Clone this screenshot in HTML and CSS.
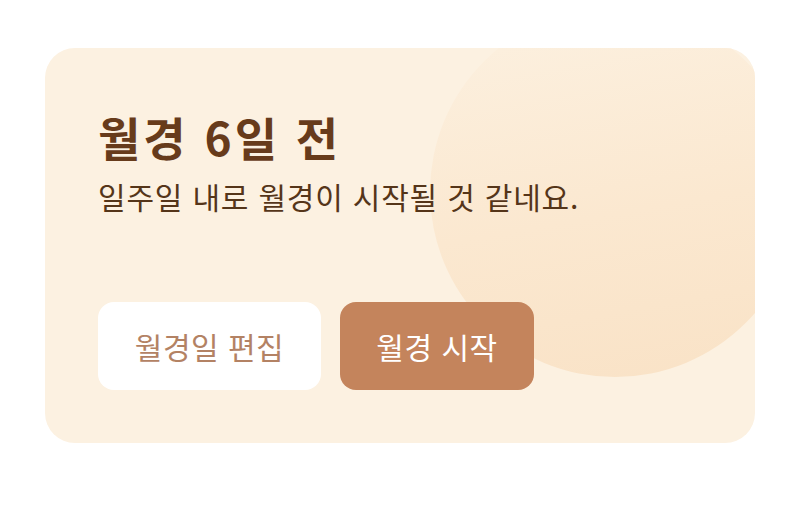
FILE: index.html
```html
<!DOCTYPE html>
<html lang="ko">
<head>
    <meta charset="UTF-8">
    <meta name="viewport" content="width=device-width, initial-scale=1.0">
    <title>월경 예정</title>
    <link rel="stylesheet" href="styles.css">
</head>
<body>
    <div class="period-card">
        <div class="deco-circle"></div>
        <div class="card-body">
            <h1 class="card-title">월경 6일 전</h1>
            <p class="card-text">일주일 내로 월경이 시작될 것 같네요.</p>
            <div class="card-actions">
                <button class="btn btn-light">월경일 편집</button>
                <button class="btn btn-brown">월경 시작</button>
            </div>
        </div>
    </div>
</body>
</html>
```

FILE: styles.css
```css
body {
    margin: 0;
    padding: 48px 45px 0 45px;
    background-color: #fff;
    font-family: "Noto Sans CJK KR", "Noto Sans", sans-serif;
}

.period-card {
    position: relative;
    overflow: hidden;
    width: 710px;
    height: 395px;
    background-color: #fcf1e1;
    border-radius: 30px;
}

/* big soft circle in the right half */
.deco-circle {
    position: absolute;
    left: 385px;
    top: -41px;
    width: 370px;
    height: 370px;
    border-radius: 50%;
    background: linear-gradient(170deg, #fcf1e1 0%, #fbe8d0 55%, #f9e2c6 100%);
}

.card-body {
    position: relative;
    padding: 58px 53px 0 53px;
}

.card-title {
    margin: 0;
    font-size: 46px;
    font-weight: 700;
    line-height: 60px;
    letter-spacing: 3px;
    color: #673b1b;
}

.card-text {
    margin: 8px 0 0 0;
    font-size: 30px;
    line-height: 44px;
    letter-spacing: 0.8px;
    color: #553519;
}

.card-actions {
    display: flex;
    gap: 19px;
    margin-top: 84px;
}

.btn {
    height: 88px;
    border: none;
    border-radius: 16px;
    font-family: inherit;
    font-size: 30px;
    letter-spacing: 0.5px;
    cursor: pointer;
}

.btn-light {
    width: 223px;
    background-color: #fff;
    color: #b38264;
}

.btn-brown {
    width: 194px;
    background-color: #c4845c;
    color: #fff;
}
```
